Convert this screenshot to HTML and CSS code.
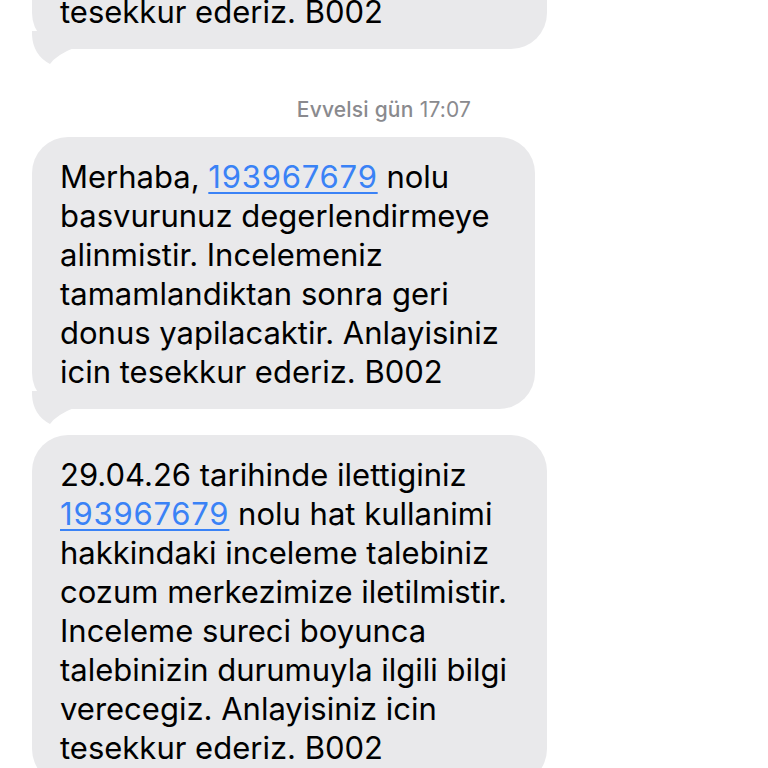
FILE: index.html
```html
<!DOCTYPE html>
<html lang="tr">
<head>
<meta charset="utf-8">
<title>Mesajlar</title>
<link rel="stylesheet" href="styles.css">
</head>
<body>
<div class="thread">
  <div class="bubble bubble-first">
    <span class="line">tesekkur ederiz. B002</span>
    <svg class="tail" viewBox="0 0 44 34" width="44" height="34" aria-hidden="true"><path d="M0 0 L0 4 Q1 24 18 33 Q24 24 44 16 L44 0 Z"/></svg>
  </div>

  <div class="stamp"><span class="stamp-day">Evvelsi gün</span> 17:07</div>

  <div class="bubble bubble-second">
    <span class="line">Merhaba, <a class="num">193967679</a> nolu</span>
    <span class="line">basvurunuz degerlendirmeye</span>
    <span class="line">alinmistir. Incelemeniz</span>
    <span class="line">tamamlandiktan sonra geri</span>
    <span class="line">donus yapilacaktir. Anlayisiniz</span>
    <span class="line">icin tesekkur ederiz. B002</span>
    <svg class="tail" viewBox="0 0 44 34" width="44" height="34" aria-hidden="true"><path d="M0 0 L0 4 Q1 24 18 33 Q24 24 44 16 L44 0 Z"/></svg>
  </div>

  <div class="bubble bubble-third">
    <span class="line">29.04.26 tarihinde ilettiginiz</span>
    <span class="line"><a class="num">193967679</a> nolu hat kullanimi</span>
    <span class="line">hakkindaki inceleme talebiniz</span>
    <span class="line">cozum merkezimize iletilmistir.</span>
    <span class="line">Inceleme sureci boyunca</span>
    <span class="line">talebinizin durumuyla ilgili bilgi</span>
    <span class="line">verecegiz. Anlayisiniz icin</span>
    <span class="line">tesekkur ederiz. B002</span>
  </div>
</div>
</body>
</html>
```

FILE: styles.css
```css
html, body {
  margin: 0;
  padding: 0;
  background: #ffffff;
  width: 768px;
  height: 768px;
  overflow: hidden;
}

body {
  font-family: Inter, "Noto Sans", "Liberation Sans", sans-serif;
  color: #000;
}

.thread {
  display: flex;
  flex-direction: column;
  align-items: flex-start;
  padding-left: 32px;
  margin-top: -67px;
}

.bubble {
  position: relative;
  background: #e9e9eb;
  border-radius: 36px;
  padding: 20px 37px 18px 28px;
  font-size: 31px;
  line-height: 39px;
  letter-spacing: 0;
}

.line {
  display: block;
  white-space: nowrap;
}

.num {
  color: #3a82f6;
  letter-spacing: 0.8px;
  text-decoration: underline;
  text-decoration-thickness: 2px;
  text-underline-offset: 4px;
}

.tail {
  position: absolute;
  left: 0;
  bottom: -16px;
  fill: #e9e9eb;
}

.bubble-first { width: 450px; padding-top: 59px; }
.bubble-second { width: 438px; }
.bubble-third { width: 450px; margin-top: 26px; }

.stamp {
  align-self: center;
  margin: 49px 0 15px -32px;
  font-size: 21px;
  line-height: 24px;
  color: #8a8a8e;
  font-weight: 400;
  letter-spacing: 0.2px;
}

.stamp-day { font-weight: 500; }
```
